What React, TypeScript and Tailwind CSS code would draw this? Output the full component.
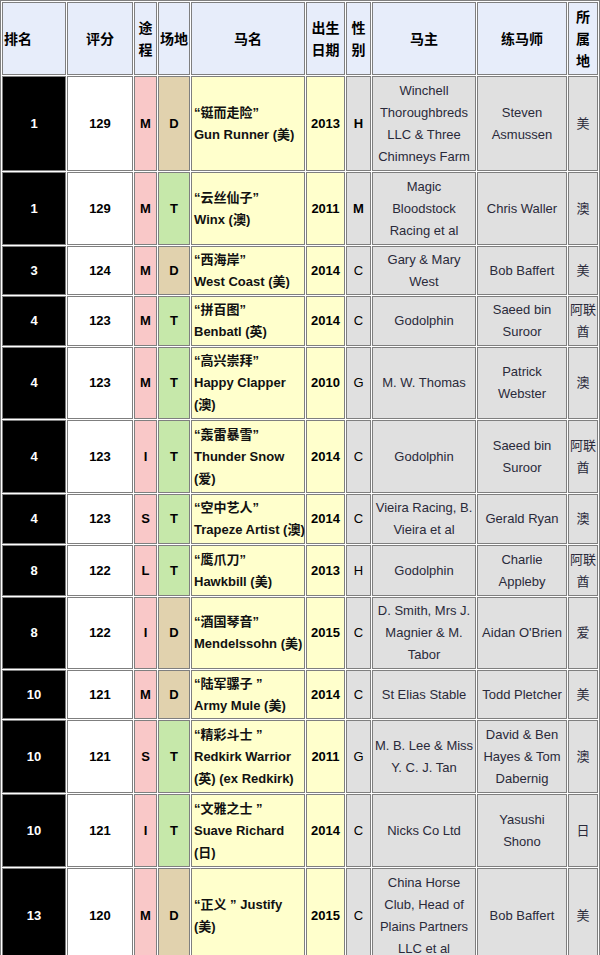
type Row = {
  rank: string;
  score: string;
  dist: string;
  surf: "D" | "T";
  cn: string;
  en: string[];
  year: string;
  sex: string;
  sexBold?: boolean;
  owner: string[];
  trainer: string[];
  country: string[];
  h: string;
};

const rows: Row[] = [
  { rank: "1", score: "129", dist: "M", surf: "D", cn: "“铤而走险”", en: ["Gun Runner (美)"], year: "2013", sex: "H", sexBold: true, owner: ["Winchell", "Thoroughbreds", "LLC & Three", "Chimneys Farm"], trainer: ["Steven", "Asmussen"], country: ["美"], h: "h-[95px]" },
  { rank: "1", score: "129", dist: "M", surf: "T", cn: "“云丝仙子”", en: ["Winx (澳)"], year: "2011", sex: "M", sexBold: true, owner: ["Magic", "Bloodstock", "Racing et al"], trainer: ["Chris Waller"], country: ["澳"], h: "h-[73px]" },
  { rank: "3", score: "124", dist: "M", surf: "D", cn: "“西海岸”", en: ["West Coast (美)"], year: "2014", sex: "C", owner: ["Gary & Mary", "West"], trainer: ["Bob Baffert"], country: ["美"], h: "h-[49px]" },
  { rank: "4", score: "123", dist: "M", surf: "T", cn: "“拼百图”", en: ["Benbatl (英)"], year: "2014", sex: "C", owner: ["Godolphin"], trainer: ["Saeed bin", "Suroor"], country: ["阿联", "酋"], h: "h-[50px]" },
  { rank: "4", score: "123", dist: "M", surf: "T", cn: "“高兴崇拜”", en: ["Happy Clapper", "(澳)"], year: "2010", sex: "G", owner: ["M. W. Thomas"], trainer: ["Patrick", "Webster"], country: ["澳"], h: "h-[72px]" },
  { rank: "4", score: "123", dist: "I", surf: "T", cn: "“轰雷暴雪”", en: ["Thunder Snow", "(爱)"], year: "2014", sex: "C", owner: ["Godolphin"], trainer: ["Saeed bin", "Suroor"], country: ["阿联", "酋"], h: "h-[73px]" },
  { rank: "4", score: "123", dist: "S", surf: "T", cn: "“空中艺人”", en: ["Trapeze Artist (澳)"], year: "2014", sex: "C", owner: ["Vieira Racing, B.", "Vieira et al"], trainer: ["Gerald Ryan"], country: ["澳"], h: "h-[50px]" },
  { rank: "8", score: "122", dist: "L", surf: "T", cn: "“鹰爪刀”", en: ["Hawkbill (美)"], year: "2013", sex: "H", owner: ["Godolphin"], trainer: ["Charlie", "Appleby"], country: ["阿联", "酋"], h: "h-[51px]" },
  { rank: "8", score: "122", dist: "I", surf: "D", cn: "“酒国琴音”", en: ["Mendelssohn (美)"], year: "2015", sex: "C", owner: ["D. Smith, Mrs J.", "Magnier & M.", "Tabor"], trainer: ["Aidan O'Brien"], country: ["爱"], h: "h-[72px]" },
  { rank: "10", score: "121", dist: "M", surf: "D", cn: "“陆军骡子 ”", en: ["Army Mule (美)"], year: "2014", sex: "C", owner: ["St Elias Stable"], trainer: ["Todd Pletcher"], country: ["美"], h: "h-[49px]" },
  { rank: "10", score: "121", dist: "S", surf: "T", cn: "“精彩斗士 ”", en: ["Redkirk Warrior", "(英) (ex Redkirk)"], year: "2011", sex: "G", owner: ["M. B. Lee & Miss", "Y. C. J. Tan"], trainer: ["David & Ben", "Hayes & Tom", "Dabernig"], country: ["澳"], h: "h-[73px]" },
  { rank: "10", score: "121", dist: "I", surf: "T", cn: "“文雅之士 ”", en: ["Suave Richard", "(日)"], year: "2014", sex: "C", owner: ["Nicks Co Ltd"], trainer: ["Yasushi", "Shono"], country: ["日"], h: "h-[73px]" },
  { rank: "13", score: "120", dist: "M", surf: "D", cn: "“正义 ”", en: [" Justify", "(美)"], year: "2015", sex: "C", owner: ["China Horse", "Club, Head of", "Plains Partners", "LLC et al"], trainer: ["Bob Baffert"], country: ["美"], h: "h-[95px]" },
];

const cell = "border border-[#7f7f7f] align-middle text-center p-0";
const head = "border border-[#7f7f7f] align-middle text-center p-0 bg-[#e7edfa] font-bold text-[14px] leading-[22px] text-black";

function Lines({ items }: { items: string[] }) {
  return (
    <>
      {items.map((t, i) => (
        <div key={i} className="whitespace-nowrap">{t}</div>
      ))}
    </>
  );
}

function NameCell({ r }: { r: Row }) {
  // row 13 keeps the english name on the chinese line
  const inline = r.en[0].startsWith(" ");
  return (
    <td className={`${cell} ${r.h} bg-[#ffffcc] text-left px-[2px] text-[#111] font-bold`}>
      <div className="whitespace-nowrap">
        {r.cn}
        {inline && r.en[0]}
      </div>
      <Lines items={inline ? r.en.slice(1) : r.en} />
    </td>
  );
}

export default function App() {
  return (
    <div className="w-[600px] bg-white [font-family:'Liberation_Sans','Noto_Sans_CJK_SC',sans-serif] text-[13px] leading-[22px]">
      <table className="w-[600px] table-fixed border-separate border-spacing-[1px] border border-[#7f7f7f]">
        <thead>
          <tr>
            <th className={`${head} h-[73px] w-[64px] text-left px-[1px]`}>排名</th>
            <th className={`${head} w-[66px]`}>评分</th>
            <th className={`${head} w-[23px]`}>途<br />程</th>
            <th className={`${head} w-[32px]`}>场地</th>
            <th className={`${head} w-[114px]`}>马名</th>
            <th className={`${head} w-[39px]`}>出生<br />日期</th>
            <th className={`${head} w-[25px]`}>性<br />别</th>
            <th className={`${head} w-[104px]`}>马主</th>
            <th className={`${head} w-[90px]`}>练马师</th>
            <th className={`${head} w-[30px]`}>所<br />属<br />地</th>
          </tr>
        </thead>
        <tbody>
          {rows.map((r, i) => (
            <tr key={i}>
              <td className={`${cell} ${r.h} bg-black text-white font-bold`}>{r.rank}</td>
              <td className={`${cell} bg-white font-bold text-black`}>{r.score}</td>
              <td className={`${cell} bg-[#f9c8c8] font-bold text-black`}>{r.dist}</td>
              <td className={`${cell} ${r.surf === "D" ? "bg-[#e1d2ae]" : "bg-[#c6e8aa]"} font-bold text-black`}>{r.surf}</td>
              <NameCell r={r} />
              <td className={`${cell} bg-[#ffffcc] font-bold text-black`}>{r.year}</td>
              <td className={`${cell} bg-[#e0e0e0] text-black ${r.sexBold ? "font-bold" : ""}`}>{r.sex}</td>
              <td className={`${cell} bg-[#e0e0e0] text-[#2a2a3a]`}><Lines items={r.owner} /></td>
              <td className={`${cell} bg-[#e0e0e0] text-[#2a2a3a]`}><Lines items={r.trainer} /></td>
              <td className={`${cell} bg-[#e0e0e0] text-[#2a2a3a]`}><Lines items={r.country} /></td>
            </tr>
          ))}
        </tbody>
      </table>
    </div>
  );
}
